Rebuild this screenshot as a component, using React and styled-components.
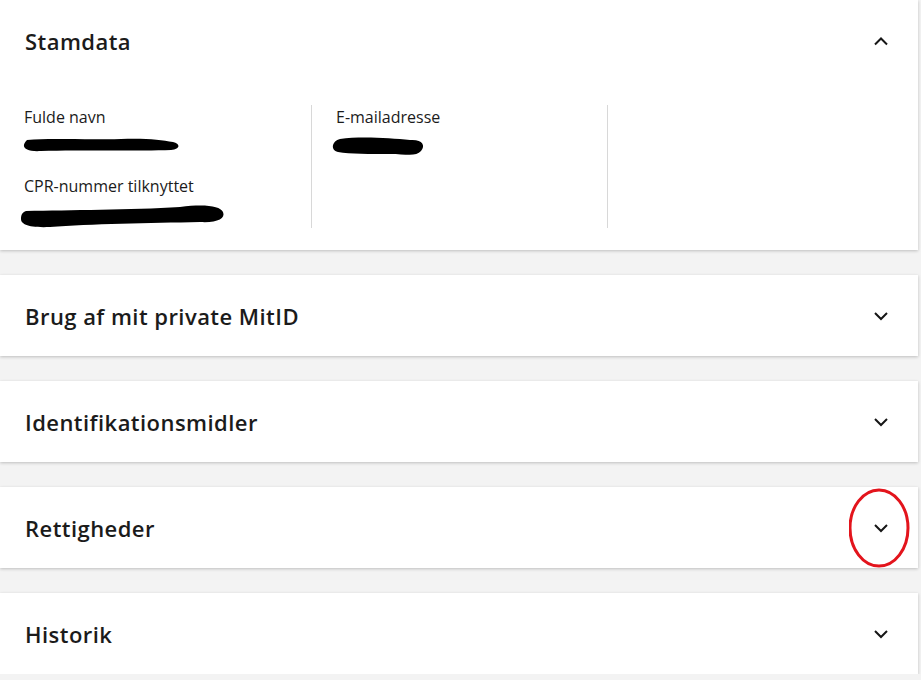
import React from "react";
import styled, { createGlobalStyle } from "styled-components";

const GlobalStyle = createGlobalStyle`
  body {
    margin: 0;
    background: #f3f3f3;
    font-family: "Open Sans", "Noto Sans", sans-serif;
    color: #1a1a1a;
  }
`;

const Page = styled.div`
  width: 918px;
  display: flex;
  flex-direction: column;
  gap: 25px;
`;

const Card = styled.section`
  background: #fff;
  box-shadow: 0 1px 3px rgba(0, 0, 0, 0.22);
`;

const Header = styled.div`
  position: relative;
  height: 81px;
  display: flex;
  align-items: center;
  justify-content: space-between;
  padding: 0 29px 0 25px;
  box-sizing: border-box;
`;

const Title = styled.h2`
  margin: 0;
  font-size: 22px;
  font-weight: 600;
  letter-spacing: 0.45px;
  color: #1b1b1b;
`;

const Body = styled.div`
  display: grid;
  grid-template-columns: 311px 296px 1fr;
  padding: 24px 0 22px;
`;

const Column = styled.div`
  display: flex;
  flex-direction: column;
  gap: 21px;
  padding-left: ${(p) => p.$pad}px;
  border-left: ${(p) => (p.$divider ? "1px solid #d8d8d8" : "none")};
  min-height: 122px;
`;

const Field = styled.div`
  display: flex;
  flex-direction: column;
  gap: 6px;
`;

const Label = styled.span`
  font-size: 16px;
  line-height: 24px;
  color: #1b1b1b;
`;

const Scribble = styled.svg`
  display: block;
  margin-left: ${(p) => p.$shift}px;
`;

const Marker = styled.svg`
  position: absolute;
  right: 5px;
  top: 0px;
`;

const Chevron = ({ up }) => (
  <svg width="16" height="10" viewBox="0 0 16 10">
    <path
      d={up ? "M2 8.5 L8 2.5 L14 8.5" : "M2 2 L8 8 L14 2"}
      fill="none"
      stroke="#161616"
      strokeWidth="2"
    />
  </svg>
);

const sections = [
  "Brug af mit private MitID",
  "Identifikationsmidler",
  "Rettigheder",
  "Historik",
];

export default function App() {
  return (
    <>
      <GlobalStyle />
      <Page>
        <Card>
          <Header>
            <Title>Stamdata</Title>
            <Chevron up />
          </Header>
          <Body>
            <Column $pad={24}>
              <Field>
                <Label>Fulde navn</Label>
                <Scribble $shift={-3} width="160" height="18" viewBox="0 0 160 18">
                  <path
                    d="M6 5 C30 3 60 5 100 4 C125 3 140 5 152 7 C160 9 159 14 150 15 C120 16 60 15 20 16 C4 17 -1 12 6 5 Z"
                    fill="#000"
                  />
                </Scribble>
              </Field>
              <Field>
                <Label>CPR-nummer tilknyttet</Label>
                <Scribble $shift={-4} width="206" height="24" viewBox="0 0 206 24">
                  <path
                    d="M6 7 C50 6 110 6 160 3 C185 0 200 2 203 8 C206 15 196 19 180 18 C130 19 70 20 30 23 C8 24 1 20 1 15 C1 10 3 8 6 7 Z"
                    fill="#000"
                  />
                </Scribble>
              </Field>
            </Column>
            <Column $divider $pad={24}>
              <Field>
                <Label>E-mailadresse</Label>
                <Scribble $shift={-6} width="96" height="24" viewBox="0 0 96 24">
                  <path
                    d="M10 4 C30 1 60 3 80 5 C92 4 96 10 91 16 C86 22 76 19 60 19 C40 19 20 19 8 17 C0 15 2 6 10 4 Z"
                    fill="#000"
                  />
                </Scribble>
              </Field>
            </Column>
            <Column $divider $pad={0} />
          </Body>
        </Card>
        {sections.map((s) => (
          <Card key={s}>
            <Header>
              <Title>{s}</Title>
              <Chevron />
              {s === "Rettigheder" && (
                <Marker width="64" height="81" viewBox="0 0 64 81">
                  <ellipse
                    cx="30"
                    cy="41"
                    rx="29"
                    ry="38"
                    fill="none"
                    stroke="#e3141c"
                    strokeWidth="3"
                  />
                </Marker>
              )}
            </Header>
          </Card>
        ))}
      </Page>
    </>
  );
}
